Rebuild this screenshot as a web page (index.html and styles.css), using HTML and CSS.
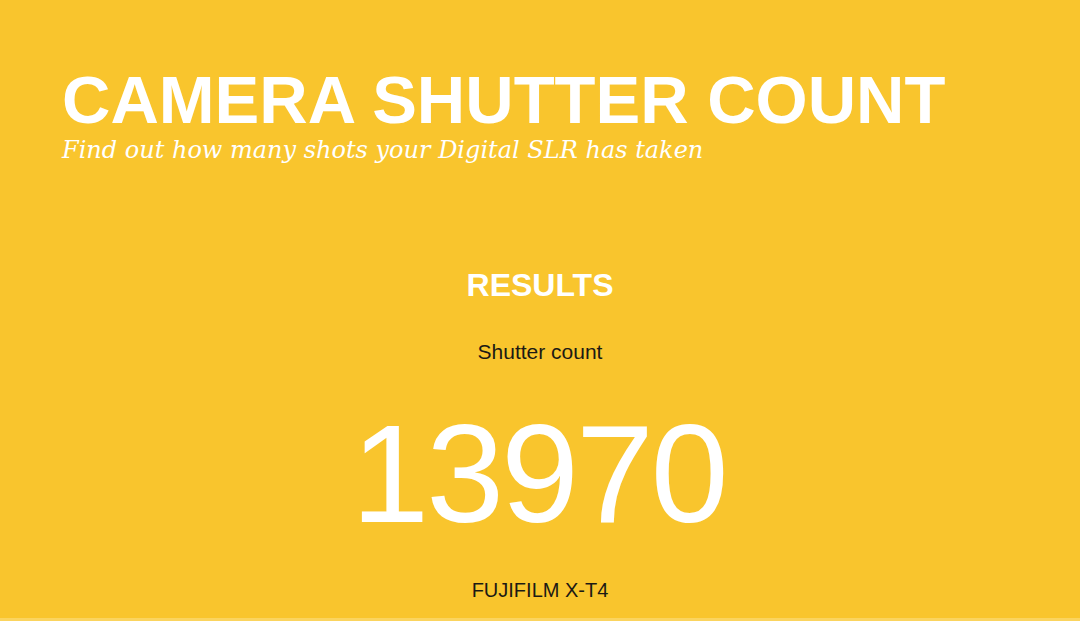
FILE: index.html
```html
<!DOCTYPE html>
<html lang="en">
<head>
  <meta charset="UTF-8" />
  <meta name="viewport" content="width=device-width, initial-scale=1.0"/>
  <title>Camera Shutter Count</title>
  <link rel="stylesheet" href="styles.css">
</head>
<body>

<header class="masthead">
  <h1>CAMERA SHUTTER COUNT</h1>
  <p class="tagline">Find out how many shots your Digital SLR has taken</p>
</header>

<section class="results">
  <h2>RESULTS</h2>
  <p class="label">Shutter count</p>
  <div class="count">13970</div>
  <p class="model">FUJIFILM X-T4</p>
</section>

</body>
</html>
```

FILE: styles.css
```css
html, body {
  height: 100%;
}

body {
  margin: 0;
  font-family: "Liberation Sans", Arial, sans-serif;
  background: #f9c52d;
  color: #1c1a14;
  overflow: hidden;
  box-shadow: inset 0 -3px 0 #fbd45e;
}

.masthead {
  padding: 64px 0 0 62px;
}

.masthead h1 {
  margin: 0;
  font-size: 67px;
  line-height: 72px;
  font-weight: bold;
  color: #fff;
}

.tagline {
  margin: -1px 0 0;
  font-family: "DejaVu Serif", Georgia, serif;
  font-style: italic;
  font-size: 24px;
  line-height: 30px;
  color: #fff;
}

.results {
  text-align: center;
  padding-top: 100px;
}

.results h2 {
  margin: 0;
  font-size: 32px;
  line-height: 40px;
  color: #fff;
}

.label {
  margin: 35px 0 0;
  font-size: 21px;
  line-height: 24px;
}

.count {
  margin-top: 30px;
  font-size: 140px;
  line-height: 160px;
  letter-spacing: -3px;
  text-indent: -3px;
  color: #fff;
}

.model {
  margin: 24px 0 0;
  font-size: 20px;
  line-height: 24px;
}
```
